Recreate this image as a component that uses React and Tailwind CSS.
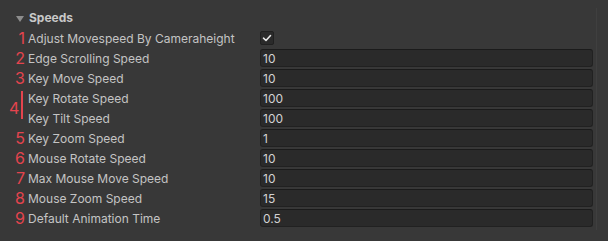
import React from "react";

const rows = [
  { n: "1", label: "Adjust Movespeed By Cameraheight", check: true },
  { n: "2", label: "Edge Scrolling Speed", value: "10" },
  { n: "3", label: "Key Move Speed", value: "10" },
  { group: "4", items: [
    { label: "Key Rotate Speed", value: "100" },
    { label: "Key Tilt Speed", value: "100" },
  ] },
  { n: "5", label: "Key Zoom Speed", value: "1" },
  { n: "6", label: "Mouse Rotate Speed", value: "10" },
  { n: "7", label: "Max Mouse Move Speed", value: "10" },
  { n: "8", label: "Mouse Zoom Speed", value: "15" },
  { n: "9", label: "Default Animation Time", value: "0.5" },
];

function Field({ label, value, check }) {
  return (
    <div className="flex items-center h-[20px]">
      <div className="w-[260px] pl-[28px] pt-[1px] whitespace-nowrap text-[12px] text-[#c4c4c4]">{label}</div>
      {check ? (
        <div className="w-[14px] h-[14px] rounded-[2px] bg-[#2a2a2a] border border-[#202020] flex items-center justify-center">
          <svg width="10" height="10" viewBox="0 0 10 10">
            <path d="M1.5 5.2 L4 7.5 L8.5 2.5" fill="none" stroke="#e6e6e6" strokeWidth="1.6" strokeLinecap="round" strokeLinejoin="round" />
          </svg>
        </div>
      ) : (
        <div className="w-[333px] h-[18px] rounded-[3px] bg-[#2a2a2a] border border-[#212121] border-t-[#1b1b1b] pl-[2px] pt-[1px] flex items-center text-[12px] text-[#d2d2d2]">
          {value}
        </div>
      )}
    </div>
  );
}

export default function App() {
  return (
    <div className="w-[608px] h-[241px] bg-[#383838] pt-[8px]" style={{ fontFamily: "Inter, 'Noto Sans', sans-serif" }}>
      <div className="w-[597px] h-[222px] border-r border-[#3f3f3f]">
        <div className="flex items-center h-[20px] pl-[16px]">
          <svg width="8" height="8" viewBox="0 0 8 8" className="mt-[1px]">
            <path d="M0 1 L8 1 L4 7 Z" fill="#8c8c8c" />
          </svg>
          <span className="ml-[5px] text-[12px] font-bold text-[#c8c8c8]">Speeds</span>
        </div>
        {rows.map((r, i) =>
          r.group ? (
            <div key={i} className="relative">
              <span className="absolute left-[9px] top-[11px] text-[16px] leading-[18px] text-[#e4444e]">{r.group}</span>
              <div className="absolute left-[21px] top-[3px] w-[2px] h-[28px] bg-[#e4444e]" />
              {r.items.map((it, j) => (
                <Field key={j} {...it} />
              ))}
            </div>
          ) : (
            <div key={i} className="relative">
              <span className="absolute left-0 w-[25px] text-right top-[1px] text-[16px] leading-[18px] text-[#e4444e]">{r.n}</span>
              <Field {...r} />
            </div>
          )
        )}
      </div>
    </div>
  );
}
